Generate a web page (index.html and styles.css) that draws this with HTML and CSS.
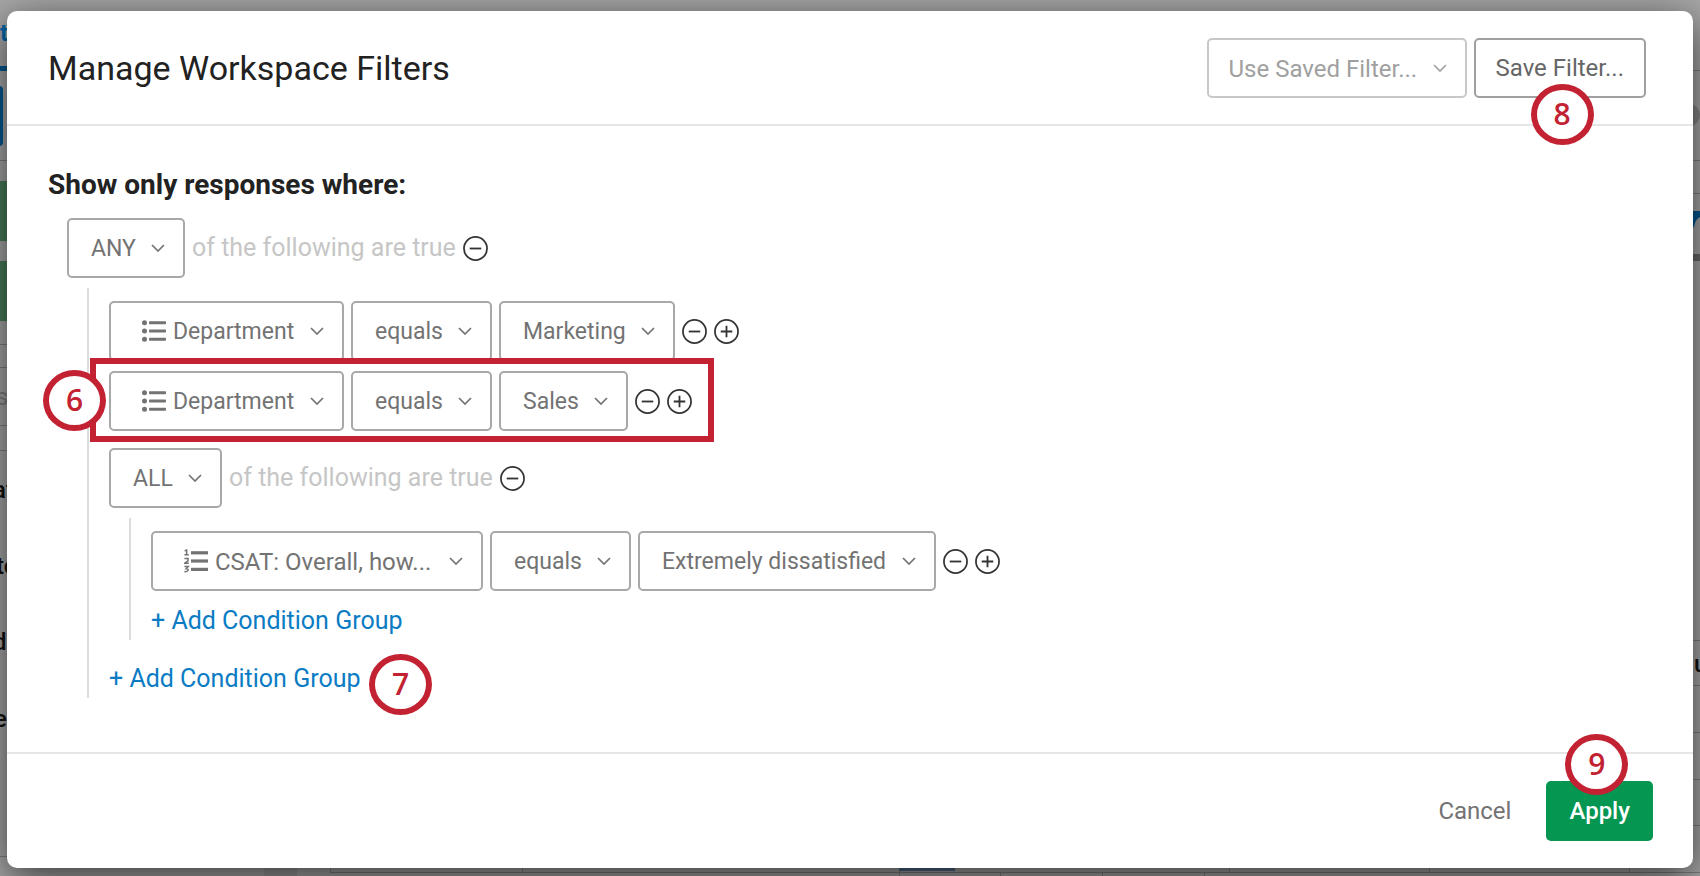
FILE: index.html
```html
<!DOCTYPE html>
<html lang="en">
  <head>
    <meta charset="UTF-8" />
    <meta name="viewport" content="width=device-width, initial-scale=1.0" />
    <title>Manage Workspace Filters</title>
    <link rel="stylesheet" href="styles.css">
  </head>
  <body>
    <!-- shared icons -->
    <svg class="sprite" aria-hidden="true">
      <symbol id="chevron" viewBox="0 0 14 8">
        <path d="M1 1l6 6 6-6" fill="none" stroke="currentColor" stroke-width="1.7" />
      </symbol>
      <symbol id="minus" viewBox="0 0 26 26">
        <circle cx="13" cy="13" r="12" fill="none" stroke="currentColor" stroke-width="1.8" />
        <path d="M7 13h12" stroke="currentColor" stroke-width="1.9" />
      </symbol>
      <symbol id="plus" viewBox="0 0 26 26">
        <circle cx="13" cy="13" r="12" fill="none" stroke="currentColor" stroke-width="1.8" />
        <path d="M7 13h12M13 7v12" stroke="currentColor" stroke-width="1.9" />
      </symbol>
      <symbol id="bullets" viewBox="0 0 24 22">
        <g fill="currentColor">
          <circle cx="2.5" cy="2.7" r="2.5" />
          <circle cx="2.5" cy="11" r="2.5" />
          <circle cx="2.5" cy="19.3" r="2.5" />
          <rect x="7" y="1.2" width="17" height="3" rx=".8" />
          <rect x="7" y="9.5" width="17" height="3" rx=".8" />
          <rect x="7" y="17.8" width="17" height="3" rx=".8" />
        </g>
      </symbol>
      <symbol id="numbers" viewBox="0 0 24 24">
        <g fill="currentColor">
          <rect x="7" y="2.2" width="17" height="3.2" />
          <rect x="7" y="10.4" width="17" height="3.2" />
          <rect x="7" y="18.8" width="17" height="3.2" />
        </g>
        <g fill="none" stroke="currentColor" stroke-width="1.5">
          <path d="M.6 1.9L2.6 1v4.6M.4 5.7h4.4" />
          <path d="M.4 9.6h3.6v2.2L.8 14.2h4" />
          <path d="M.4 17.6h3.8l-2 2.2c3 0 3 3.2-1.8 2.8" />
        </g>
      </symbol>
    </svg>

    <!-- page behind the dialog -->
    <svg class="behind behind-left" width="20" height="876" aria-hidden="true">
      <text x="0" y="41" class="tab-text">t</text>
      <rect class="blue" y="66" width="20" height="5" />
      <rect class="blue" x="-10" y="86" width="13" height="60" rx="4" />
      <rect class="green" y="181" width="20" height="60" />
      <rect class="green" y="261" width="20" height="60" />
      <path class="rule" d="M0 160.5h20M0 344.5h20M0 367.5h20M0 425.5h20M0 450.5h20M0 856.5h20" />
      <text x="-4" y="405" class="faint-text">s</text>
      <text x="-7" y="498" class="row-text">at</text>
      <text x="-4" y="574" class="row-text">to</text>
      <text x="-7" y="650" class="row-text">d</text>
      <text x="-6" y="727" class="row-text">e</text>
    </svg>
    <svg class="behind behind-right" width="20" height="876" aria-hidden="true">
      <path class="rule" d="M0 70.5h20M0 160.5h20M0 193.5h20M0 640.5h20M0 685.5h20M0 732.5h20M0 779.5h20M0 825.5h20" />
      <circle class="dot" cx="9" cy="115" r="11" />
      <path class="blue" d="M12 211h8v6q-5 2-6 11l-2-4z" />
      <rect class="bar" y="254" width="20" height="7" />
      <text x="14" y="672" class="row-text">u</text>
    </svg>
    <svg class="behind behind-bottom" width="1700" height="20" aria-hidden="true">
      <rect class="shade" x="264" width="33" height="20" />
      <path class="rule" d="M330.5 0v16M330 16.5h1370M522.5 0v16M899.5 0v20M1229.5 0v16M1429.5 0v16M1629.5 0v16M1000.5 16v4M1102.5 16v4M1204.5 16v4" />
      <rect class="dark-blue" x="899" y="12" width="56" height="3" />
    </svg>

    <div class="modal" role="dialog" aria-labelledby="title">
      <div class="modal-header">
        <h1 id="title">Manage Workspace Filters</h1>
        <div class="header-buttons">
          <div class="field field-disabled">
            <select aria-label="Saved filter" disabled>
              <option>Use Saved Filter...</option>
            </select>
            <svg class="chevron"><use href="#chevron" /></svg>
          </div>
          <div class="anchor">
            <button type="button" class="btn btn-outline">Save Filter...</button>
            <span class="badge badge-save">8</span>
          </div>
        </div>
      </div>

      <div class="modal-body">
        <h2>Show only responses where:</h2>
        <div class="group">
          <div class="row">
            <div class="field">
              <select aria-label="Match"><option>ANY</option><option>ALL</option></select>
              <svg class="chevron"><use href="#chevron" /></svg>
            </div>
            <span class="hint">of the following are true</span>
            <button type="button" class="icon-btn" aria-label="Remove group"><svg><use href="#minus" /></svg></button>
          </div>

          <div class="children">
            <div class="row">
              <div class="field field-icon">
                <svg class="type-icon"><use href="#bullets" /></svg>
                <select aria-label="Field"><option>Department</option></select>
                <svg class="chevron"><use href="#chevron" /></svg>
              </div>
              <div class="field">
                <select aria-label="Operator"><option>equals</option></select>
                <svg class="chevron"><use href="#chevron" /></svg>
              </div>
              <div class="field">
                <select aria-label="Value"><option>Marketing</option></select>
                <svg class="chevron"><use href="#chevron" /></svg>
              </div>
              <button type="button" class="icon-btn" aria-label="Remove condition"><svg><use href="#minus" /></svg></button>
              <button type="button" class="icon-btn" aria-label="Add condition"><svg><use href="#plus" /></svg></button>
            </div>

            <div class="row row-marked">
              <div class="field field-icon">
                <svg class="type-icon"><use href="#bullets" /></svg>
                <select aria-label="Field"><option>Department</option></select>
                <svg class="chevron"><use href="#chevron" /></svg>
              </div>
              <div class="field">
                <select aria-label="Operator"><option>equals</option></select>
                <svg class="chevron"><use href="#chevron" /></svg>
              </div>
              <div class="field">
                <select aria-label="Value"><option>Sales</option></select>
                <svg class="chevron"><use href="#chevron" /></svg>
              </div>
              <button type="button" class="icon-btn" aria-label="Remove condition"><svg><use href="#minus" /></svg></button>
              <button type="button" class="icon-btn" aria-label="Add condition"><svg><use href="#plus" /></svg></button>
              <span class="badge badge-row">6</span>
            </div>

            <div class="group group-nested">
              <div class="row">
                <div class="field">
                  <select aria-label="Match"><option>ALL</option></select>
                  <svg class="chevron"><use href="#chevron" /></svg>
                </div>
                <span class="hint">of the following are true</span>
                <button type="button" class="icon-btn" aria-label="Remove group"><svg><use href="#minus" /></svg></button>
              </div>
              <div class="children">
                <div class="row">
                  <div class="field field-icon">
                    <svg class="type-icon"><use href="#numbers" /></svg>
                    <select class="select-question" aria-label="Field"><option>CSAT: Overall, how...</option></select>
                    <svg class="chevron"><use href="#chevron" /></svg>
                  </div>
                  <div class="field">
                    <select aria-label="Operator"><option>equals</option></select>
                    <svg class="chevron"><use href="#chevron" /></svg>
                  </div>
                  <div class="field">
                    <select aria-label="Value"><option>Extremely dissatisfied</option></select>
                    <svg class="chevron"><use href="#chevron" /></svg>
                  </div>
                  <button type="button" class="icon-btn" aria-label="Remove condition"><svg><use href="#minus" /></svg></button>
                  <button type="button" class="icon-btn" aria-label="Add condition"><svg><use href="#plus" /></svg></button>
                </div>
                <a href="#" class="add-link">+ Add Condition Group</a>
              </div>
            </div>

            <div class="anchor add-outer">
              <a href="#" class="add-link">+ Add Condition Group</a>
              <span class="badge badge-add">7</span>
            </div>
          </div>
        </div>
      </div>

      <div class="modal-footer">
        <button type="button" class="btn btn-plain">Cancel</button>
        <div class="anchor">
          <button type="button" class="btn btn-apply">Apply</button>
          <span class="badge badge-apply">9</span>
        </div>
      </div>
    </div>
  </body>
</html>
```

FILE: styles.css
```css
* {
  box-sizing: border-box;
}
body {
  margin: 0;
  height: 100vh;
  padding: 11px 7px 8px;
  overflow: hidden;
  position: relative;
  background-color: #a8a8a8;
  font-family: Roboto, Arial, sans-serif;
  font-size: 24px;
  line-height: 30px;
  color: #222222;
}
.sprite {
  position: absolute;
  width: 0;
  height: 0;
}

/* page behind the dialog */
.behind {
  position: absolute;
}
.behind-left {
  left: 0;
  top: 0;
}
.behind-right {
  right: 0;
  top: 0;
}
.behind-bottom {
  left: 0;
  bottom: 0;
}
.rule {
  stroke: #808080;
  stroke-width: 1;
}
.blue {
  fill: #005a94;
}
.dark-blue {
  fill: #4c6c8a;
}
.green {
  fill: #4a7f5a;
}
.dot {
  fill: #888888;
}
.bar {
  fill: #6a6a6a;
}
.shade {
  fill: #9c9c9c;
}
.tab-text {
  fill: #0068ab;
  font-weight: 700;
}
.faint-text {
  fill: #808080;
}
.row-text {
  fill: #111111;
  font-weight: 500;
}

/* dialog */
.modal {
  position: relative;
  display: flex;
  flex-direction: column;
  height: 100%;
  background-color: #ffffff;
  border-radius: 10px;
  box-shadow: 0 10px 40px rgba(0, 0, 0, 0.68);
}
.modal-header {
  display: flex;
  align-items: center;
  justify-content: space-between;
  padding: 27px 47px 26px 41px;
  border-bottom: 2px solid #e6e6e6;
}
h1 {
  margin: 0;
  font-size: 34px;
  line-height: 40px;
  font-weight: 400;
}
h2 {
  margin: 0 0 16px;
  font-size: 28px;
  line-height: 34px;
  font-weight: 700;
}
.header-buttons {
  display: flex;
  gap: 7px;
}
.modal-body {
  flex: 1;
  padding: 42px 41px 40px;
}
.modal-footer {
  display: flex;
  align-items: center;
  justify-content: flex-end;
  gap: 12px;
  padding: 27px 40px;
  border-top: 2px solid #e6e6e6;
}

/* filter tree */
.group {
  margin-left: 19px;
}
.group-nested {
  margin: 7px 0 0;
}
.children {
  display: flex;
  flex-direction: column;
  align-items: flex-start;
  gap: 10px;
  margin: 10px 0 0 20px;
  padding: 13px 0 4px 20px;
  border-left: 2px solid #dcdcdc;
}
.row {
  display: flex;
  align-items: center;
  gap: 7px;
  width: fit-content;
}
.hint {
  color: #c6c6c6;
  font-size: 25px;
}
.add-link {
  margin-top: 5px;
  color: #0b7cc4;
  font-size: 25px;
  text-decoration: none;
}
.add-outer {
  margin-top: 14px;
}

/* controls */
.field {
  display: flex;
  align-items: center;
  height: 60px;
  padding: 0 18px 0 22px;
  border: 2px solid #a8a8a8;
  border-radius: 5px;
  color: #737373;
  font-size: 23px;
}
.field select {
  appearance: none;
  padding: 2px 0 0;
  border: none;
  background: none;
  font: inherit;
  color: inherit;
  opacity: 1;
}
.field .select-question {
  width: 219px;
  font-size: 24px;
}
.field-icon {
  padding-left: 31px;
}
.field-disabled {
  padding-left: 20px;
  border-color: #c8c8c8;
  color: #a0a0a0;
  font-size: 24px;
}
.chevron {
  width: 14px;
  height: 8px;
  margin-left: 15px;
}
.type-icon {
  width: 24px;
  height: 24px;
  margin-right: 7px;
}
.btn {
  height: 60px;
  padding: 0 21px;
  border: 2px solid transparent;
  border-radius: 5px;
  background: none;
  font: inherit;
  color: #737373;
}
.btn-outline {
  padding: 0 20px;
  border-color: #a0a0a0;
  color: #666666;
}
.btn-apply {
  background-color: #059652;
  color: #ffffff;
  font-weight: 500;
}
.icon-btn {
  display: flex;
  padding: 0;
  border: none;
  background: none;
  color: #333333;
}
.icon-btn svg {
  width: 25px;
  height: 25px;
}

/* numbered callouts */
.anchor {
  position: relative;
}
.row-marked {
  position: relative;
}
.row-marked::after {
  content: "";
  position: absolute;
  inset: -13px -22px -11px -19px;
  border: 6px solid #c32232;
}
.badge {
  position: absolute;
  z-index: 1;
  display: flex;
  align-items: center;
  justify-content: center;
  width: 63px;
  height: 61px;
  padding-bottom: 2px;
  border: 6px solid #c32232;
  border-radius: 50%;
  background-color: #ffffff;
  color: #c32232;
  font-family: "Open Sans", "Noto Sans", sans-serif;
  font-size: 30px;
  font-weight: 600;
}
.badge-save {
  left: 57px;
  top: 46px;
}
.badge-row {
  left: -66px;
  top: -1px;
}
.badge-add {
  left: 260px;
  top: -10px;
}
.badge-apply {
  left: 19px;
  top: -47px;
}
```
